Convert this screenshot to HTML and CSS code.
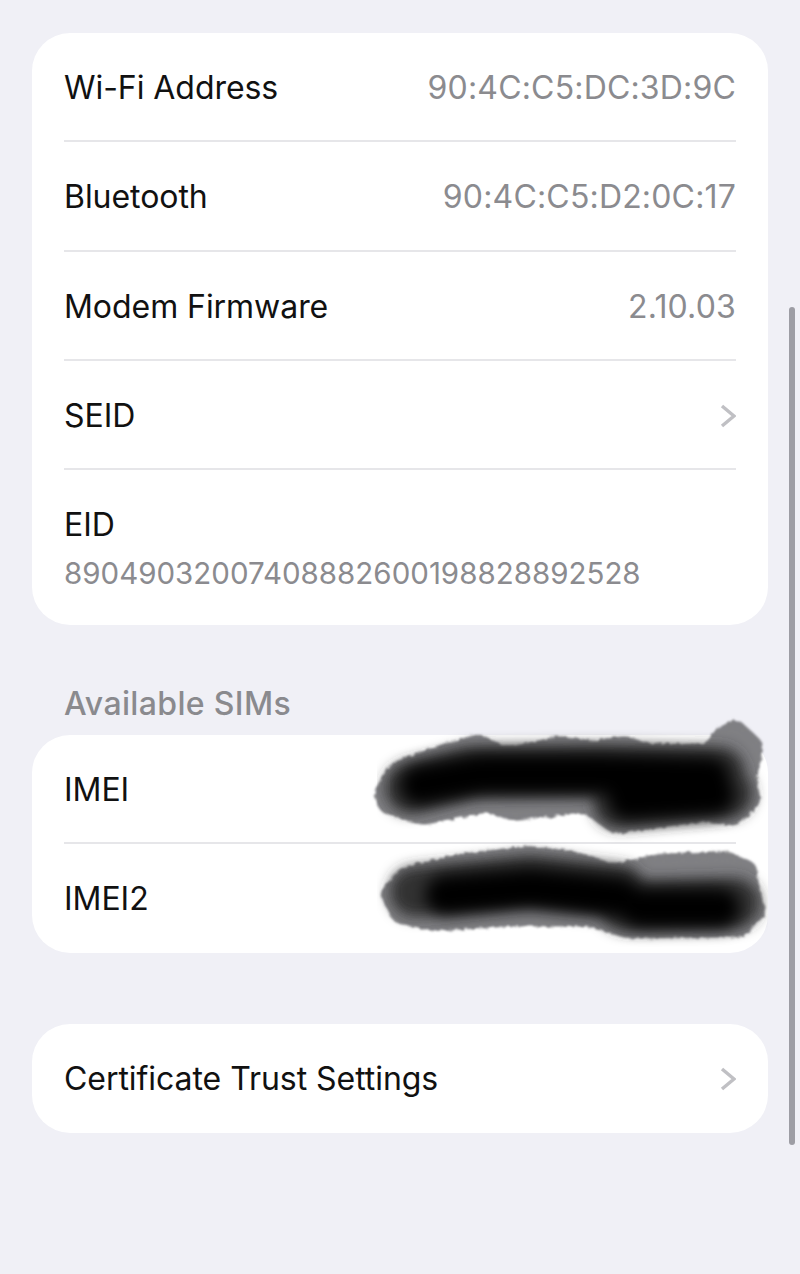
FILE: index.html
```html
<!DOCTYPE html>
<html lang="en">
<head>
<meta charset="utf-8">
<title>About</title>
<link rel="stylesheet" href="styles.css">
</head>
<body>
<main class="page">
  <section class="card card-info">
    <div class="row"><span class="label">Wi-Fi Address</span><span class="value">90:4C:C5:DC:3D:9C</span></div>
    <div class="row"><span class="label">Bluetooth</span><span class="value">90:4C:C5:D2:0C:17</span></div>
    <div class="row"><span class="label">Modem Firmware</span><span class="value">2.10.03</span></div>
    <div class="row"><span class="label">SEID</span><svg class="chev" viewBox="0 0 16 24"><path d="M2 2l12 10L2 22"/></svg></div>
    <div class="row row-stack"><span class="label">EID</span><span class="sub">89049032007408882600198828892528</span></div>
  </section>
  <h2 class="heading">Available SIMs</h2>
  <section class="card card-sims">
    <div class="row"><span class="label">IMEI</span></div>
    <div class="row"><span class="label">IMEI2</span></div>
  </section>
  <section class="card card-last">
    <div class="row"><span class="label">Certificate Trust Settings</span><svg class="chev" viewBox="0 0 16 24"><path d="M2 2l12 10L2 22"/></svg></div>
  </section>
</main>
<svg class="smudge" viewBox="0 0 800 1274" aria-hidden="true">
  <defs>
    <filter id="rough" x="-10%" y="-30%" width="120%" height="160%">
      <feGaussianBlur in="SourceGraphic" stdDeviation="5" result="b"/>
      <feComponentTransfer in="b" result="t"><feFuncA type="linear" slope="7" intercept="-3"/></feComponentTransfer>
      <feTurbulence type="fractalNoise" baseFrequency="0.2" numOctaves="2" seed="4" result="n"/>
      <feDisplacementMap in="t" in2="n" scale="5" result="d"/>
      <feGaussianBlur in="d" stdDeviation="1.2"/>
    </filter>
    <filter id="wide" x="-10%" y="-40%" width="120%" height="180%"><feGaussianBlur stdDeviation="7"/></filter>
    <filter id="core" x="-10%" y="-40%" width="120%" height="180%"><feGaussianBlur stdDeviation="8"/></filter>
  </defs>
  <g filter="url(#rough)" class="smudge-edge">
    <path d="M372 793L390 763L443 743L480 733L507 747L560 735L593 740L627 735L647 743L707 743L713 730L737 717L765 743L757 780L762 803L737 827L703 822L613 835L583 813L513 822L487 813L423 826L380 813Z"/>
    <path d="M378 893L400 867L460 853L527 845L573 850L613 863L660 853L727 850L757 863L760 890L768 913L743 938L627 939L587 927L510 927L433 932L393 923Z"/>
  </g>
  <g filter="url(#wide)" class="smudge-mid">
    <path d="M410 788L470 772L600 770L720 772"/>
    <path d="M618 803L728 793"/>
    <path d="M415 892L530 880L620 890"/>
    <path d="M625 906L735 903"/>
  </g>
  <g filter="url(#core)" class="smudge-core">
    <path d="M420 785L480 774L600 774L710 777"/>
    <path d="M628 800L715 795"/>
    <path d="M445 895L530 888L620 897"/>
    <path d="M640 908L720 908"/>
  </g>
</svg>
<div class="scrollbar"></div>
</body>
</html>
```

FILE: styles.css
```css
* { box-sizing: border-box; }
html, body { margin: 0; height: 1274px; overflow: hidden; }
body {
  position: relative;
  background: #f0f0f6;
  font-family: Inter, "Liberation Sans", sans-serif;
  color: #111;
}
.page { padding: 33px 32px 0; }
.card {
  background: #fff;
  border-radius: 38px;
  padding: 0 32px;
}
.row {
  display: flex;
  align-items: center;
  justify-content: space-between;
  height: 109px;
  border-bottom: 2px solid #e6e6e9;
}
.row:last-child { border-bottom: 0; }
.card-info .row { height: 109.25px; padding-top: 3px; }
.card-sims .row:first-child { padding-top: 2px; }
.card-info .row-stack {
  flex-direction: column;
  align-items: flex-start;
  justify-content: flex-start;
  height: 155px;
  padding-top: 35px;
}
.label { font-size: 32px; line-height: 40px; letter-spacing: -0.05px; }
.value { font-size: 32px; line-height: 40px; color: #8b8b8f; letter-spacing: 0.17px; }
.sub { font-size: 29.5px; line-height: 36px; margin-top: 10px; color: #8b8b8f; }
.chev { width: 16px; height: 24px; fill: none; stroke: #c0c0c4; stroke-width: 3.5; }
.heading {
  margin: 60px 32px 12px;
  font-size: 32px;
  line-height: 38px;
  font-weight: 500;
  letter-spacing: 0.35px;
  color: #8a8a8e;
}
.card-last { margin-top: 71px; }
.smudge { position: absolute; left: 0; top: 0; width: 800px; height: 1274px; pointer-events: none; }
.smudge-edge { fill: #808083; fill-opacity: 0.9; }
.smudge-mid { fill: none; stroke: #333; stroke-width: 50; stroke-linecap: round; stroke-linejoin: round; }
.smudge-core { fill: none; stroke: #000; stroke-width: 40; stroke-linecap: round; stroke-linejoin: round; }
.scrollbar {
  position: absolute;
  left: 789px;
  top: 307px;
  width: 6px;
  height: 838px;
  border-radius: 3px;
  background: #9d9da4;
}
```
